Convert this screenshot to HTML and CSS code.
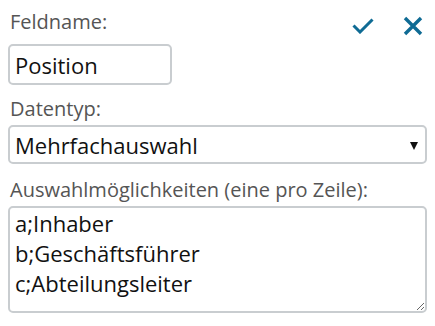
FILE: index.html
```html
<!DOCTYPE html>
<html lang="de">
<head>
<meta charset="utf-8">
<link rel="stylesheet" href="styles.css">
</head>
<body>
<div class="form">
  <div class="head">
    <label class="label" for="name">Feldname:</label>
    <div class="actions">
      <button class="icon-btn" aria-label="Speichern">
        <svg width="22" height="16" viewBox="0 0 22 16"><path d="M1.5 7.5 L8 14 L20.5 1.5" fill="none" stroke="#0f6b94" stroke-width="3"/></svg>
      </button>
      <button class="icon-btn" aria-label="Abbrechen">
        <svg width="20" height="20" viewBox="0 0 20 20"><path d="M2 2 L18 18 M18 2 L2 18" fill="none" stroke="#0f6b94" stroke-width="3.4"/></svg>
      </button>
    </div>
  </div>
  <input id="name" class="field name" type="text" value="Position">
  <label class="label" for="type">Datentyp:</label>
  <div class="select-wrap">
    <select id="type" class="field select">
      <option>Mehrfachauswahl</option>
    </select>
    <span class="arrow"></span>
  </div>
  <label class="label" for="opts">Auswahlmöglichkeiten (eine pro Zeile):</label>
  <textarea id="opts" class="field area">a;Inhaber
b;Geschäftsführer
c;Abteilungsleiter</textarea>
</div>
</body>
</html>
```
FILE: styles.css
```css
* { box-sizing: border-box; }
body {
  margin: 0;
  background: #fff;
  font-family: "Open Sans", "Noto Sans", sans-serif;
}
.form {
  padding: 8px 8px 0 8px;
  display: flex;
  flex-direction: column;
}
.head {
  display: flex;
  justify-content: space-between;
  align-items: flex-start;
  height: 36px;
  padding-top: 2px;
}
.label {
  display: block;
  color: #555;
  font-size: 20px;
  line-height: 24px;
  padding-left: 2px;
}
.actions {
  display: flex;
  align-items: center;
  height: 31px;
  gap: 29px;
  padding-right: 4px;
}
.icon-btn {
  border: 0;
  background: none;
  padding: 0;
  display: flex;
}
.field {
  font-family: "Open Sans", "Noto Sans", sans-serif;
  font-size: 22px;
  color: #111;
  border: 2px solid #c9cdd0;
  border-radius: 5px;
  background: #fff;
  outline: none;
}
.name {
  width: 164px;
  height: 41px;
  padding: 0 5px;
  margin-bottom: 12px;
}
.form > .label { margin-bottom: 4px; }
.select-wrap {
  position: relative;
  margin-bottom: 14px;
}
.select {
  width: 100%;
  height: 39px;
  padding: 0 5px;
  appearance: none;
  -webkit-appearance: none;
}
.arrow {
  position: absolute;
  right: 9px;
  top: 17px;
  width: 0;
  height: 0;
  border-left: 4.5px solid transparent;
  border-right: 4.5px solid transparent;
  border-top: 8px solid #111;
}
.area {
  width: 100%;
  height: 107px;
  padding: 0 5px;
  line-height: 30px;
  resize: vertical;
}
```
